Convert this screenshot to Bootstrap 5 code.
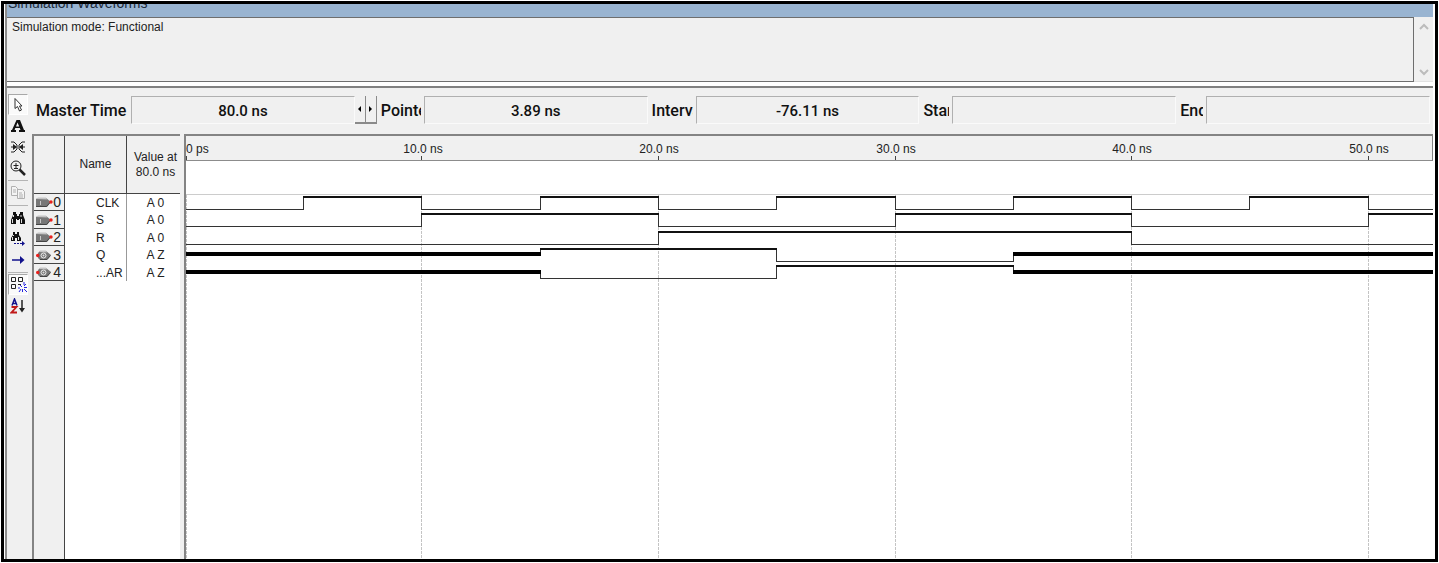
<!DOCTYPE html>
<html lang="en">
<head>
<meta charset="utf-8">
<meta name="viewport" content="width=device-width, initial-scale=1">
<title>Simulation Waveforms</title>
<link href="https://cdn.jsdelivr.net/npm/bootstrap@5.3.0/dist/css/bootstrap.min.css" rel="stylesheet">
<style>
  :root { --face: #f0f0f0; --edge: #848484; }
  body { font: 12px/15px "Liberation Sans", Arial, sans-serif; color: #222; background: #fff; padding: 1px; }
  .sim-window { height: calc(100vh - 2px); min-height: 340px; border: 3px solid #000; padding: 0 2px 0 1px; }
  .sim-inner { border-left: 2px solid #8c8c8c; background: var(--face); }
  .title-strip { height: 13px; background: #99b4d1; font-size: 14px; line-height: 14px; padding-left: 1px; color: #1c2a3a; }
  .title-strip span { display: block; margin-top: -8px; }
  .msg-row { height: 65px; }
  .msg-box { border: 1px solid #6e6e6e; border-left: 0; background: var(--face); padding: 2px 5px; }
  .msg-scroll { width: 19px; padding: 6px 0 5px; border-bottom: 1px solid #e2e2e2; }
  .plain-btn { border: 0; background: none; padding: 0; display: flex; align-items: center; justify-content: center; }
  .split-bar { height: 6px; background: #fff; border-bottom: 2px solid #808080; }
  .tool-strip { width: 25px; padding: 6px 4px 0 1px; }
  .tool-strip .plain-btn { height: 21px; width: 20px; }
  .tool-strip .pressed { background: #fafafa; border: 1px solid #fff; border-top-color: #a8a8a8; border-left-color: #a8a8a8; }
  .tool-sep { height: 4px; display: flex; align-items: center; }
  .tool-sep::before { content: ""; width: 20px; height: 1px; background: #b4b4b4; }
  .time-row { height: 46px; padding: 8px 3px 9px 0; font: 500 15px/30px Roboto, "Liberation Sans", sans-serif; color: #111; }
  .time-row label { flex: none; overflow: hidden; white-space: nowrap; margin: 0 3px 0 4px; font-size: 16px; }
  .time-row input { flex: 1 1 0; min-width: 0; height: 28px; font: inherit; color: inherit; text-align: center; background: var(--face); border: 1px solid #fafafa; border-top-color: #b0b0b0; border-left-color: #b0b0b0; border-radius: 0; padding: 2px 0 0; outline: 0; }
  .w-master { width: 92px; } .w-pointer { width: 40px; } .w-interval { width: 41px; } .w-start { width: 26px; } .w-end { width: 23px; }
  .step-btn { width: 11px; height: 28px; background: var(--face); border: solid #8a8a8a; border-width: 0 1px 2px 0; padding: 0; display: flex; align-items: center; justify-content: center; }
  .signal-pane { width: 148px; border-left: 2px solid var(--edge); border-top: 2px solid var(--edge); background: #fff; }
  .sig-table { width: 146px; table-layout: fixed; border-collapse: separate; border-spacing: 0; color: #222; }
  .sig-table th { height: 58px; font-weight: 400; background: var(--face); border-right: 1px solid #444; border-bottom: 1px solid #444; text-align: center; padding: 0; vertical-align: middle; }
  .sig-table th:last-child { border-right: 0; }
  .sig-table td { height: 17px; line-height: 16px; padding: 0; white-space: nowrap; }
  .sig-table tr:nth-child(even) td { height: 18px; }
  .sig-table td:first-child { background: var(--face); border-right: 1px solid #444; border-bottom: 1px solid #444; }
  .sig-table td:nth-child(2) { padding-left: 31px; border-right: 1px solid #999; }
  .sig-table td:nth-child(3), .sig-table th:nth-child(3) { text-align: center; padding-left: 4px; }
  .c-num { width: 31px; } .c-name { width: 62px; }
  .num-cell { display: flex; align-items: center; justify-content: space-between; padding: 0 3px 0 2px; font-size: 14px; height: 16px; }
  .num-cell svg { flex: none; }
  .num-tail { width: 31px; background: var(--face); border-right: 1px solid #444; }
  .wave-pane { margin-left: 4px; border-left: 2px solid var(--edge); border-top: 2px solid var(--edge); background: #fff; min-width: 0; overflow: hidden; }
  .ruler { height: 25px; background: var(--face); border-right: 1px solid #808080; border-bottom: 1px solid #8c8c8c; flex: none; }
  svg { display: block; }
  .ruler svg, .waves svg { width: 100%; height: 100%; }
  .waves { min-height: 0; }
</style>
</head>
<body>
<svg width="0" height="0" class="position-absolute" aria-hidden="true">
  <symbol id="pin-in" viewBox="0 0 17 12">
    <path d="M0 3l2-1h8l5 4-4 5H0z" fill="#777"/><path d="M0 3l2-1.500h8l1 2z" fill="#c4c4c4"/><path d="M4.500 5v4" stroke="#c8c8c8"/><path d="M0 10.500h10.500l3.500-4" stroke="#444" fill="none"/><circle cx="15" cy="6" r="1.700" fill="#e8201c"/>
  </symbol>
  <symbol id="pin-out" viewBox="0 0 17 12">
    <path d="M2 4l2-2h6l5 4-4 5H4L2 9z" fill="#777"/><path d="M3 3l1-1.500h6l1 2z" fill="#c4c4c4"/><circle cx="7.500" cy="6.500" r="2.500" fill="#777" stroke="#eee"/><circle cx="7.500" cy="6.500" r="1" fill="#ddd"/><path d="M4 10.500h7l3.500-4" stroke="#444" fill="none"/><circle cx="1.700" cy="6.500" r="1.700" fill="#e8201c"/>
  </symbol>
</svg>
<div class="sim-window d-flex overflow-hidden">
 <div class="sim-inner d-flex flex-column flex-grow-1 overflow-hidden">
  <div class="title-strip overflow-hidden flex-shrink-0"><span>Simulation Waveforms</span></div>
  <div class="msg-row d-flex flex-shrink-0">
    <div class="msg-box flex-grow-1">Simulation mode: Functional</div>
    <div class="msg-scroll d-flex flex-column justify-content-between align-items-center">
      <button class="plain-btn" type="button" aria-label="Scroll up"><svg width="10" height="8"><path d="M1 6l4-4 4 4" fill="none" stroke="#bcbcbc" stroke-width="2"/></svg></button>
      <button class="plain-btn" type="button" aria-label="Scroll down"><svg width="10" height="8"><path d="M1 2l4 4 4-4" fill="none" stroke="#bcbcbc" stroke-width="2"/></svg></button>
    </div>
  </div>
  <div class="split-bar flex-shrink-0"></div>
  <div class="d-flex flex-grow-1 overflow-hidden">
    <div class="tool-strip flex-shrink-0">
      <button class="plain-btn pressed" type="button" aria-label="Select"><svg width="16" height="16"><path d="M5 1.500v10l2.500-2 2 4.500 2-1-2-4H12z" fill="#fff" stroke="#333"/></svg></button>
      <button class="plain-btn" type="button" aria-label="Text"><svg width="16" height="16"><path d="M6.500 2H10l4 10h1v2H9v-2h1.500l-.7-2H5.300l-.7 2H6v2H1v-2h1zM7.500 4.500L6 8.500h3.200z" fill="#111" fill-rule="evenodd"/></svg></button>
      <button class="plain-btn" type="button" aria-label="Waveform editing"><svg width="16" height="16" fill="none" stroke="#222"><path d="M1 3h3l3 3v4l-3 3H1M15 3h-3L9 6v4l3 3h3M1 8h5M10 8h5"/><path d="M3 5l4 3-4 3zM13 5L9 8l4 3z" fill="#222" stroke="none"/></svg></button>
      <button class="plain-btn" type="button" aria-label="Zoom"><svg width="16" height="16" fill="none" stroke="#222"><circle cx="6" cy="6" r="5"/><path d="M3.500 5.500h5M6 3v5M4 8.500h4"/><path d="M9.500 9.500L15 15" stroke-width="2.500"/></svg></button>
      <div class="tool-sep"></div>
      <button class="plain-btn" type="button" aria-label="Copy"><svg width="16" height="16" fill="#f4f4f4" stroke="#b0b0b0"><path d="M1.500 1.500h4l2 2v7h-6zM7.500 4.500h5l2 2v7h-7z"/><path d="M3 5h3M3 7h3M9 8h3M9 10h4M9 12h4"/></svg></button>
      <div class="tool-sep"></div>
      <button class="plain-btn" type="button" aria-label="Find"><svg width="16" height="16" fill="#111"><path d="M3 2h3v2h1v2h2V4h1V2h3v3l2 5v4h-5V9H9v1H7V9H6v5H1v-4l2-5z"/><path d="M3.500 5v2M2.500 9v4M11 5v2M11.500 9v4" stroke="#ddd"/></svg></button>
      <button class="plain-btn" type="button" aria-label="Find next"><svg width="16" height="16"><path d="M3 1h2v2h2V1h2v3l2 3v3H7V7H5v3H1V7l2-3z" fill="#111"/><path d="M3.500 4v1M2.500 6v3M8.500 6v3" stroke="#ddd"/><path d="M4 12.500h8" stroke="#11118c" stroke-dasharray="2 1"/><path d="M12 10l3 2.500-3 2.500z" fill="#11118c"/></svg></button>
      <button class="plain-btn" type="button" aria-label="Go to"><svg width="16" height="16"><path d="M2 8h10" stroke="#11118c" stroke-width="1.500"/><path d="M10 4l4.500 4-4.500 4z" fill="#11118c"/></svg></button>
      <div class="tool-sep"></div>
      <button class="plain-btn pressed" type="button" aria-label="Snap to grid"><svg class="flex-shrink-0" width="17" height="17" fill="none"><path d="M1.500 1.500h4v4h-4zM8.500 1.500h4v4h-4zM1.500 8.500h4v4h-4zM8 8.500h3" stroke="#222"/><path d="M10 9l2 2M14 6v3M16 8l-2 2M8 12h2M14 11.500h3M11 13l-2 3M12.500 13v3M14 13l3 3" stroke="#2424e0"/></svg></button>
      <button class="plain-btn" type="button" aria-label="Sort"><svg width="16" height="16" fill="none"><path d="M2 7.500L4.500 1 7 7.500M3 5.500h3" stroke="#11118c" stroke-width="1.500"/><path d="M1.500 9h5l-5 5.500H7" stroke="#c01818" stroke-width="1.800"/><path d="M12 2v10" stroke="#222" stroke-width="1.500"/><path d="M9 10h6l-3 4.500z" fill="#222"/></svg></button>
    </div>
    <div class="d-flex flex-column flex-grow-1 overflow-hidden">
      <div class="time-row d-flex flex-shrink-0">
        <label class="w-master" for="master">Master Time</label><input id="master" readonly value="80.0 ns">
        <button class="step-btn" type="button" aria-label="Previous"><svg width="5" height="6"><path d="M4 0v6L1 3z"/></svg></button><button class="step-btn" type="button" aria-label="Next"><svg width="5" height="6"><path d="M1 0v6l3-3z"/></svg></button>
        <label class="w-pointer" for="pointer">Pointer</label><input id="pointer" readonly value="3.89 ns">
        <label class="w-interval" for="interval">Interval</label><input id="interval" readonly value="-76.11 ns">
        <label class="w-start" for="start">Start</label><input id="start" readonly>
        <label class="w-end" for="end">End</label><input id="end" readonly>
      </div>
      <div class="d-flex flex-grow-1 overflow-hidden">
        <div class="signal-pane d-flex flex-column flex-shrink-0">
          <table class="sig-table">
            <colgroup><col class="c-num"><col class="c-name"><col></colgroup>
            <thead><tr><th></th><th>Name</th><th>Value at<br>80.0 ns</th></tr></thead>
            <tbody>
              <tr><td><div class="num-cell"><svg width="17" height="12"><use href="#pin-in"/></svg>0</div></td><td>CLK</td><td>A 0</td></tr>
              <tr><td><div class="num-cell"><svg width="17" height="12"><use href="#pin-in"/></svg>1</div></td><td>S</td><td>A 0</td></tr>
              <tr><td><div class="num-cell"><svg width="17" height="12"><use href="#pin-in"/></svg>2</div></td><td>R</td><td>A 0</td></tr>
              <tr><td><div class="num-cell"><svg width="17" height="12"><use href="#pin-out"/></svg>3</div></td><td>Q</td><td>A Z</td></tr>
              <tr><td><div class="num-cell"><svg width="17" height="12"><use href="#pin-out"/></svg>4</div></td><td>...AR</td><td>A Z</td></tr>
            </tbody>
          </table>
          <div class="num-tail flex-grow-1"></div>
        </div>
        <div class="wave-pane d-flex flex-column flex-grow-1">
          <div class="ruler"><svg fill="#222" text-anchor="middle">
            <text x="0" y="17" text-anchor="start">0 ps</text><text x="237" y="17">10.0 ns</text><text x="473" y="17">20.0 ns</text><text x="710" y="17">30.0 ns</text><text x="946" y="17">40.0 ns</text><text x="1183" y="17">50.0 ns</text>
            <path d="M.5 20v4M235.500 20v4M472.500 20v4M709.500 20v4M945.500 20v4M1182.500 20v4" stroke="#444"/>
          </svg></div>
          <div class="waves flex-grow-1"><svg fill="none" stroke="#333" shape-rendering="crispEdges">
            <path d="M0 33.500h4000" stroke="#ccc"/>
            <path d="M.5 34v2000M235.500 34v2000M472.500 34v2000M709.500 34v2000M945.500 34v2000M1182.500 34v2000" stroke="#c4c4c4" stroke-dasharray="3 1"/>
            <!-- thin strokes: low levels and edges -->
            <path d="M0 48.500H117.500V36M235.500 36V48.500H354.500V36M472.500 36V48.500H590.500V36M709.500 36V48.500H827.500V36M945.500 36V48.500H1063.500V36M1182.500 36V48.500H4000"/>
            <path d="M0 65.500H235.500V53M472.500 53V65.500H709.500V53M945.500 53V65.500H1182.500V53"/>
            <path d="M0 83.500H472.500V70M945.500 70V83.500H4000"/>
            <path d="M354.500 94V88M590.500 88V100.500H827.500V93"/>
            <path d="M354.500 110V117.500H590.500V105M827.500 105V111"/>
            <!-- high levels -->
            <path stroke="#111" stroke-width="2" d="M117 36H236M354 36H473M590 36H710M827 36H946M1063 36H1183M235 53H473M709 53H946M1182 53H4000M472 71H946M354 88H591M590 105H828"/>
            <!-- high impedance -->
            <path stroke="#000" stroke-width="4" d="M0 93H355M827 93H4000M0 111H355M827 111H4000"/>
          </svg></div>
        </div>
      </div>
    </div>
  </div>
 </div>
</div>
<script src="https://cdn.jsdelivr.net/npm/bootstrap@5.3.0/dist/js/bootstrap.bundle.min.js"></script>
</body>
</html>
